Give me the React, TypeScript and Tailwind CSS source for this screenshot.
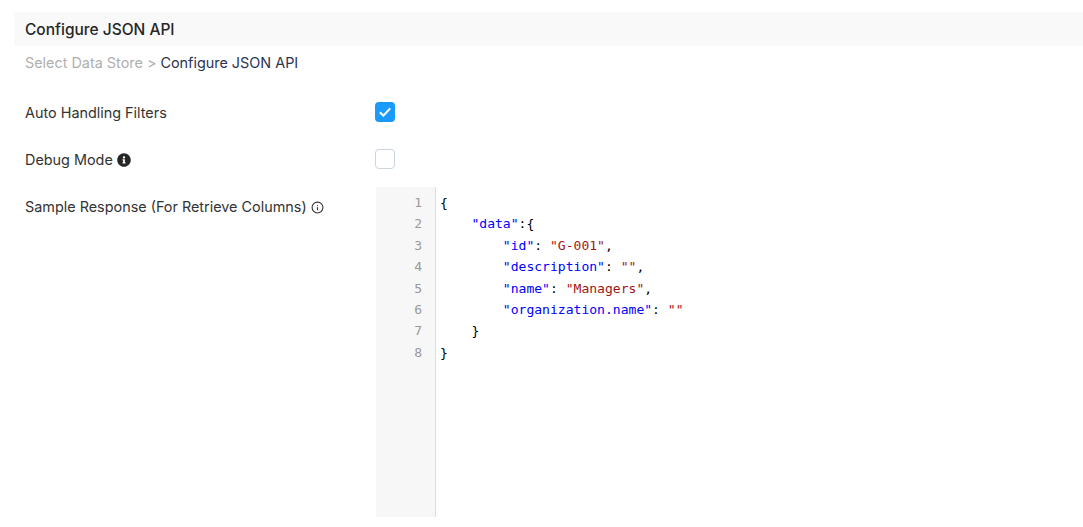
import { Info } from "lucide-react";
import { FaInfoCircle } from "react-icons/fa";

const Q = ({ children }: { children: string }) => <span className="text-[#0000ff]">{children}</span>;
const S = ({ children }: { children: string }) => <span className="text-[#a31515]">{children}</span>;

const lines = [
  <>{"{"}</>,
  <>{"    "}<Q>"data"</Q>:{"{"}</>,
  <>{"        "}<Q>"id"</Q>: <S>"G-001"</S>,</>,
  <>{"        "}<Q>"description"</Q>: <S>""</S>,</>,
  <>{"        "}<Q>"name"</Q>: <S>"Managers"</S>,</>,
  <>{"        "}<Q>"organization.name"</Q>: <S>""</S></>,
  <>{"    "}{"}"}</>,
  <>{"}"}</>,
];

export default function App() {
  return (
    <div className="h-[527px] overflow-hidden bg-white pt-3 pl-[14px] font-['Inter',sans-serif] text-[14.4px] text-[#333]">
      <div className="flex h-[34px] items-center bg-[#f9f9f9] pt-px pl-[11px] text-[15.5px] font-medium text-[#262626]">
        Configure JSON API
      </div>
      <div className="flex h-[34px] items-center pl-[11px]">
        <span className="text-[#b0b0b0]">Select Data Store &gt;&nbsp;</span>
        <span className="text-[#2c3550]">Configure JSON API</span>
      </div>
      <div className="mt-[22px] flex h-[20px] items-center pl-[11px]">
        <div className="w-[350px] pt-[2px]">Auto Handling Filters</div>
        <div className="flex size-5 items-center justify-center rounded bg-[#1a9bfc]">
          <svg width="12" height="10" viewBox="0 0 12 10" fill="none">
            <path d="M0.8 5.2 4.4 8.6 11.2 1.4" stroke="white" strokeWidth="2.1" />
          </svg>
        </div>
      </div>
      <div className="mt-[27px] flex h-[20px] items-center pl-[11px]">
        <div className="flex w-[350px] items-center gap-1 pt-[2px]">
          Debug Mode
          <FaInfoCircle size={14} className="text-[#262626]" />
        </div>
        <div className="size-5 rounded border border-[#cbd5e1] bg-white" />
      </div>
      <div className="mt-[18px] flex pl-[11px]">
        <div className="flex h-[40px] w-[351px] items-center gap-1 self-start">
          Sample Response (For Retrieve Columns)
          <Info size={13} className="text-[#333]" />
        </div>
        <div className="flex h-[330px] flex-1 font-['DejaVu_Sans_Mono',monospace] text-[13.05px] leading-[21.4px]">
          <div className="w-[60px] border-r border-[#dcdcdc] bg-[#f7f7f7] pt-[5px] pr-[13px] text-right text-[#999]">
            {lines.map((_, i) => (
              <div key={i}>{i + 1}</div>
            ))}
          </div>
          <div className="whitespace-pre pt-[5px] pl-1 text-black">
            {lines.map((line, i) => (
              <div key={i}>{line}</div>
            ))}
          </div>
        </div>
      </div>
    </div>
  );
}
